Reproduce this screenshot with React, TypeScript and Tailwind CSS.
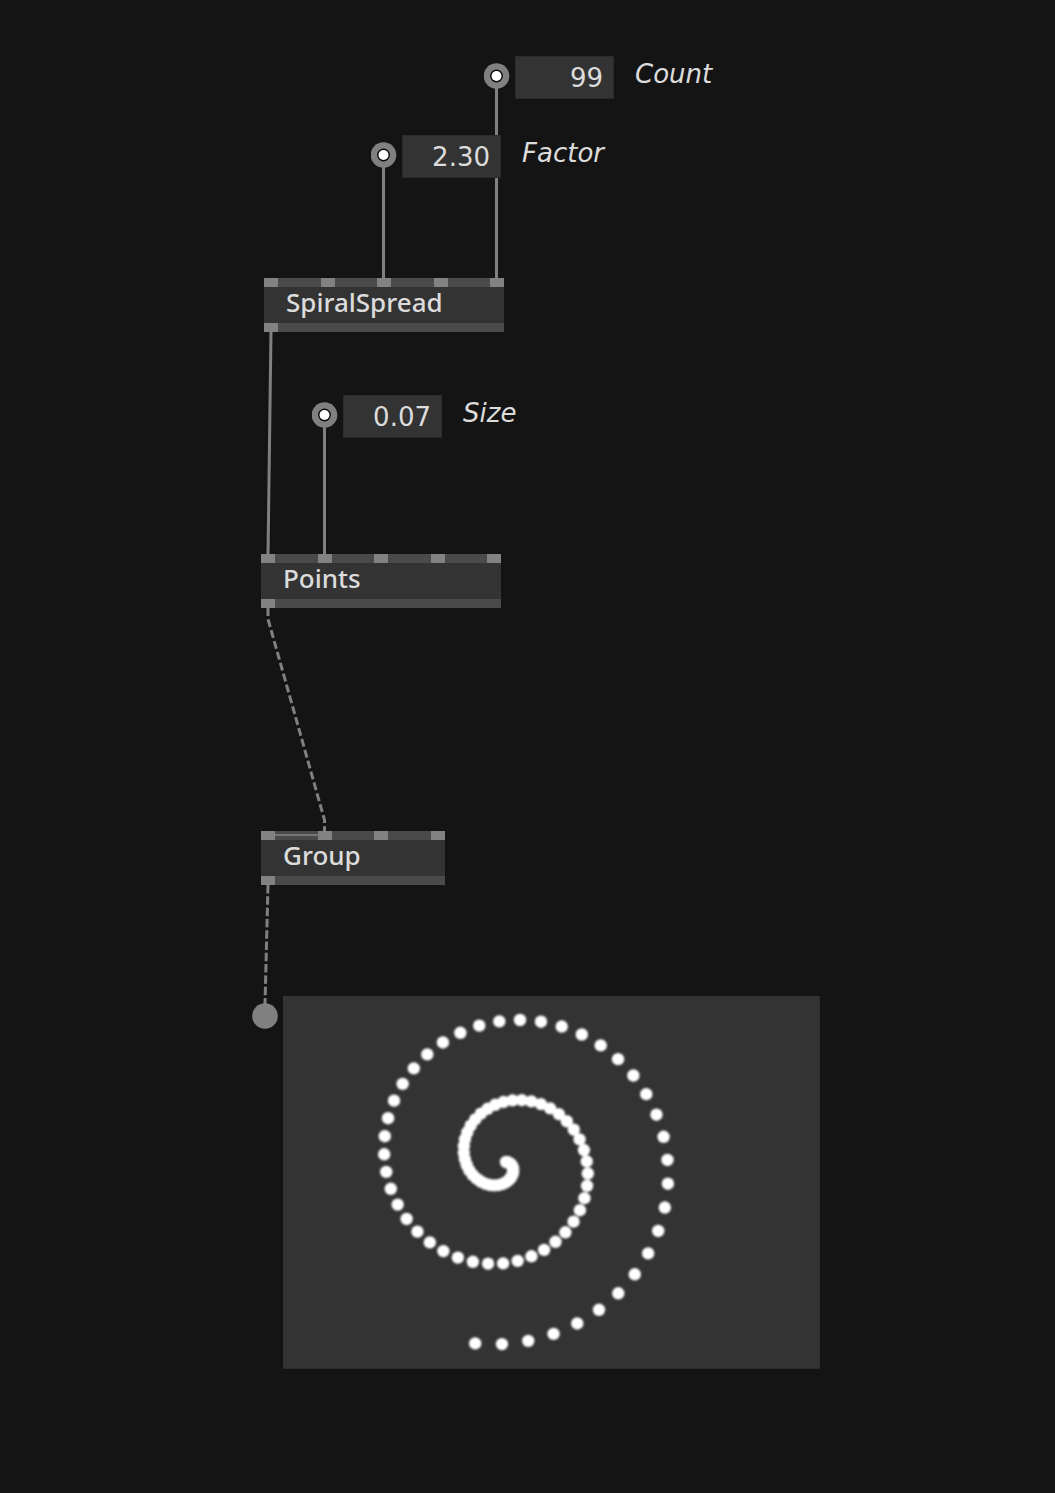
import { useState } from "react";

type NodeProps = { title: string; inputs: number; place: string };

function Pin() {
  return <span className="h-full w-3.5 bg-[#828282]" />;
}

function PatchNode({ title, inputs, place }: NodeProps) {
  const grouped = title === "Group";
  return (
    <section className={`absolute flex flex-col bg-[#333333] ${place}`}>
      <div className="relative flex h-[9px] justify-between bg-[#4a4a4a]">
        {grouped && <span className="absolute top-[3px] left-3.5 h-0.5 w-11 bg-[#757575]" />}
        {Array.from({ length: inputs }, (_, i) => (
          <Pin key={i} />
        ))}
      </div>
      <h2 className="h-9 pl-[22px] text-[26px] leading-[30px] font-medium">{title}</h2>
      <div className="flex h-[9px] bg-[#4a4a4a]">
        <Pin />
      </div>
    </section>
  );
}

type ValueProps = { id: string; label: string; initial: string; place: string };

function ValueBox({ id, label, initial, place }: ValueProps) {
  const [value, setValue] = useState(initial);
  return (
    <div className={`absolute flex items-start font-['DejaVu_Sans',sans-serif] ${place}`}>
      <svg className="mt-[7px] size-[26px]" viewBox="0 0 26 26" aria-hidden="true">
        <circle cx="12.500" cy="13" r="12.800" fill="#808080" />
        <circle cx="12.500" cy="13" r="6.400" fill="#080808" />
        <circle cx="12.500" cy="13" r="5" fill="#ffffff" />
      </svg>
      <input
        id={id}
        value={value}
        onChange={(e) => setValue(e.target.value)}
        className="ml-[5px] h-[43px] w-[99px] border border-[#2b2b2b] bg-[#333333] pr-2.5 text-right text-[26px] outline-none"
      />
      <label htmlFor={id} className="ml-[21px] text-[26px] leading-9 italic">
        {label}
      </label>
    </div>
  );
}

function Links() {
  return (
    <svg
      className="absolute top-0 left-0 h-[1100px] w-[700px]"
      viewBox="0 0 700 1100"
      fill="none"
      stroke="#808080"
      strokeWidth="3"
      aria-hidden="true"
    >
      <path d="M496.500 76V280" />
      <path d="M383.500 155V280" />
      <path d="M271 331L268 556" />
      <path d="M324.500 414V556" />
      <path d="M268 608V619L324.500 820V832" strokeDasharray="8 3.300" />
      <path d="M268 885L265 1004" strokeDasharray="8.500 2.800" />
      <circle cx="265" cy="1016" r="12.800" fill="#808080" stroke="none" />
    </svg>
  );
}

const COUNT = 99;
const FACTOR = 2.3;

const dots = Array.from({ length: COUNT }, (_, i) => {
  const angle = (FACTOR * 2 * Math.PI * i) / COUNT;
  const radius = (184 * i) / (COUNT - 1);
  return { x: 223 + radius * Math.cos(angle), y: 166 + radius * Math.sin(angle) };
});

function Preview() {
  return (
    <div className="absolute top-[996px] left-[283px] border-r border-b border-[#2c2c2c] bg-[#333333]">
      <svg className="h-[372px] w-[536px]" viewBox="0 0 536 372" role="img" aria-label="Spiral of points">
        <defs>
          <filter id="soft" x="-5%" y="-5%" width="110%" height="110%">
            <feGaussianBlur stdDeviation="1" />
          </filter>
        </defs>
        <g fill="#ffffff" filter="url(#soft)">
          {dots.map((d, i) => (
            <circle key={i} cx={d.x} cy={d.y} r="6.200" />
          ))}
        </g>
      </svg>
    </div>
  );
}

export default function App() {
  return (
    <main className="relative min-h-screen overflow-hidden bg-[#141414] font-['Noto_Sans',sans-serif] text-[#dcdcdc]">
      <Links />
      <ValueBox id="count" label="Count" initial="99" place="top-14 left-[484px]" />
      <ValueBox id="factor" label="Factor" initial="2.30" place="top-[135px] left-[371px]" />
      <PatchNode title="SpiralSpread" inputs={5} place="top-[278px] left-[264px] w-60" />
      <ValueBox id="size" label="Size" initial="0.07" place="top-[395px] left-[312px]" />
      <PatchNode title="Points" inputs={5} place="top-[554px] left-[261px] w-60" />
      <PatchNode title="Group" inputs={4} place="top-[831px] left-[261px] w-[184px]" />
      <Preview />
    </main>
  );
}
